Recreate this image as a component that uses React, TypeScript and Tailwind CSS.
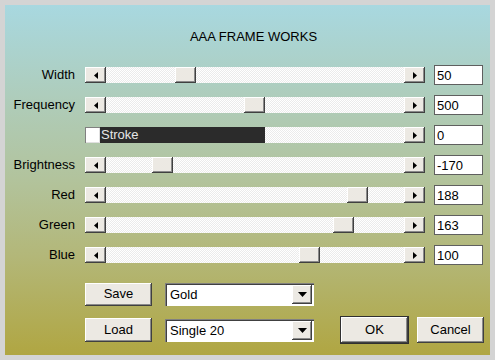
import React from "react";

const raised =
  "bg-[#ece9e3] shadow-[inset_-1px_-1px_0_#404040,inset_1px_1px_0_#ffffff,inset_-2px_-2px_0_#8a8a8a]";
const track =
  "bg-[repeating-conic-gradient(#ffffff_0_25%,#ebebeb_0_50%)] bg-[length:2px_2px]";

function ArrowLeft() {
  return (
    <svg width="4" height="7" viewBox="0 0 4 7">
      <path d="M4 0 L0 3.5 L4 7 Z" fill="#000" />
    </svg>
  );
}
function ArrowRight() {
  return (
    <svg width="4" height="7" viewBox="0 0 4 7">
      <path d="M0 0 L4 3.5 L0 7 Z" fill="#000" />
    </svg>
  );
}
function ArrowDown() {
  return (
    <svg width="9" height="5" viewBox="0 0 9 5">
      <path d="M0 0 L9 0 L4.5 5 Z" fill="#000" />
    </svg>
  );
}

function ArrowBtn({ dir }: { dir: "l" | "r" }) {
  return (
    <div className={`w-[21px] h-[16px] flex items-center justify-center shrink-0 ${raised}`}>
      {dir === "l" ? <ArrowLeft /> : <ArrowRight />}
    </div>
  );
}

function Scroll({ thumb }: { thumb: number }) {
  return (
    <div className="relative w-[340px] h-[16px] flex">
      <ArrowBtn dir="l" />
      <div className={`flex-1 ${track}`} />
      <ArrowBtn dir="r" />
      <div
        className={`absolute top-0 w-[21px] h-[16px] ${raised}`}
        style={{ left: thumb }}
      />
    </div>
  );
}

function ValueBox({ v }: { v: string }) {
  return (
    <div className="ml-[9px] w-[49px] h-[20px] bg-white border border-[#5f5f5f] flex items-center pl-[2px] text-[13px] text-black leading-none">
      {v}
    </div>
  );
}

function Row({ label, thumb, v }: { label: string; thumb: number; v: string }) {
  return (
    <div className="h-[30px] flex items-center">
      <div className="w-[70px] text-right text-[13px] text-black">{label}</div>
      <div className="ml-[10px]">
        <Scroll thumb={thumb} />
      </div>
      <ValueBox v={v} />
    </div>
  );
}

function Btn({ children, h, def }: { children: React.ReactNode; h: string; def?: boolean }) {
  return (
    <div
      className={`w-[67px] ${h} flex items-center justify-center text-[13px] text-black ${raised} ${
        def ? "outline outline-1 outline-[#303030]" : ""
      }`}
    >
      {children}
    </div>
  );
}

function Combo({ text }: { text: string }) {
  return (
    <div className="w-[149px] h-[23px] bg-white shadow-[inset_1px_1px_0_#808080,inset_2px_2px_0_#404040,inset_-1px_-1px_0_#ffffff] flex items-center pl-[5px] pr-[2px]">
      <div className="flex-1 text-[13px] text-black leading-none">{text}</div>
      <div className={`w-[20px] h-[19px] flex items-center justify-center ${raised}`}>
        <ArrowDown />
      </div>
    </div>
  );
}

export default function App() {
  return (
    <div
      className="w-[495px] h-[360px] bg-[#d4d4d4] p-[5px]"
      style={{ fontFamily: '"Liberation Sans", Arial, sans-serif' }}
    >
      <div className="w-[485px] h-[350px] bg-[linear-gradient(to_bottom,#a8d8e0_0%,#afcbb6_30%,#b2c39c_50%,#b3b778_72%,#b0a642_100%)] flex flex-col pt-[24px]">
        <div className="h-[16px] leading-[16px] text-center text-[13px] text-black pl-[12px]">
          AAA FRAME WORKS
        </div>
        <div className="mt-[15px] flex flex-col">
          <Row label="Width" thumb={90} v="50" />
          <Row label="Frequency" thumb={159} v="500" />
          <div className="h-[30px] flex items-center">
            <div className="w-[70px]" />
            <div className="ml-[10px] w-[340px] h-[16px] flex">
              <div className="w-[15px] h-[16px] bg-white shadow-[inset_1px_1px_0_#808080,inset_-1px_-1px_0_#e0e0e0]" />
              <div className="w-[165px] h-[16px] bg-[#2b2b2b] text-[#e6e6e6] text-[13px] leading-[16px] pl-[1px]">
                Stroke
              </div>
              <div className={`flex-1 ${track}`} />
              <ArrowBtn dir="r" />
            </div>
            <ValueBox v="0" />
          </div>
          <Row label="Brightness" thumb={67} v="-170" />
          <Row label="Red" thumb={262} v="188" />
          <Row label="Green" thumb={248} v="163" />
          <Row label="Blue" thumb={214} v="100" />
        </div>
        <div className="mt-[12px] h-[24px] flex items-center pl-[80px]">
          <Btn h="h-[23px]">Save</Btn>
          <div className="ml-[13px]">
            <Combo text="Gold" />
          </div>
        </div>
        <div className="mt-[11px] h-[26px] flex items-center pl-[80px]">
          <Btn h="h-[24px]">Load</Btn>
          <div className="ml-[13px]">
            <Combo text="Single 20" />
          </div>
          <div className="ml-[27px]">
            <Btn h="h-[26px]" def>
              OK
            </Btn>
          </div>
          <div className="ml-[9px]">
            <Btn h="h-[26px]">Cancel</Btn>
          </div>
        </div>
      </div>
    </div>
  );
}
